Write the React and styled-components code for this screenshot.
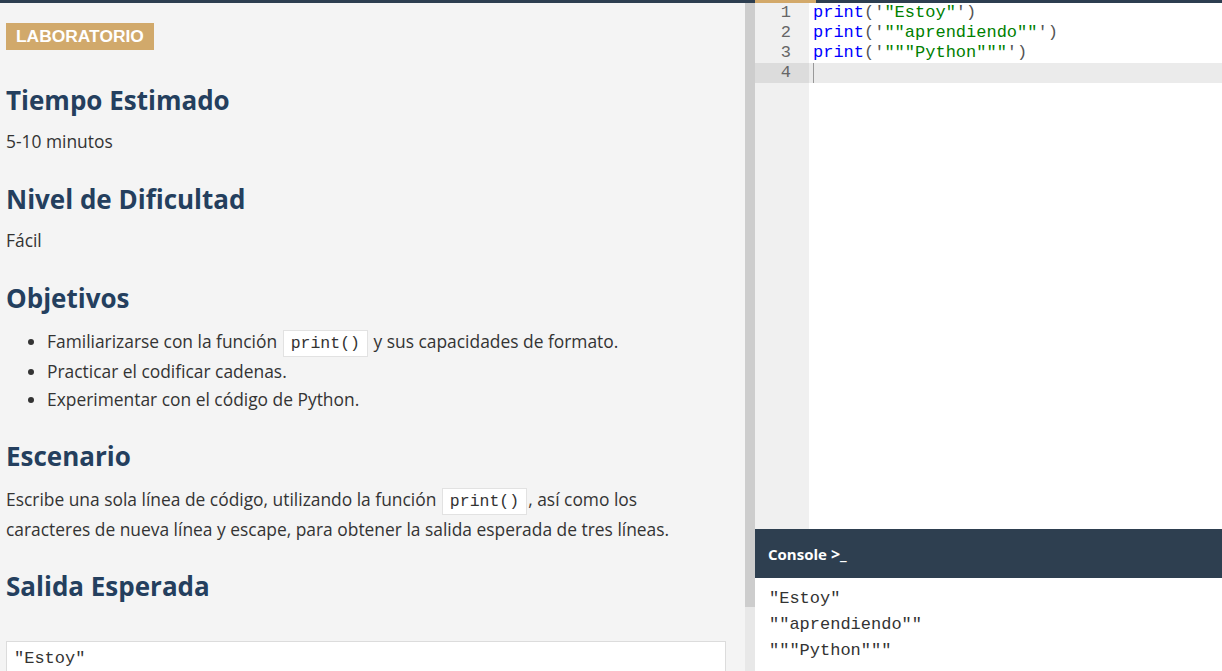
import React from "react";
//Styling
import styled, { createGlobalStyle } from "styled-components";

const GlobalStyle = createGlobalStyle`
  html, body {
    margin: 0;
    padding: 0;
    height: 100%;
    overflow: hidden;
  }
  body {
    font-family: "Open Sans", "Liberation Sans", sans-serif;
    color: #333;
  }
`;

//Data
const code = [
  { text: `"Estoy"`, quote: "'" },
  { text: `""aprendiendo""`, quote: "'" },
  { text: `"""Python"""`, quote: "'" },
];

const output = [`"Estoy"`, `""aprendiendo""`, `"""Python"""`];

const App = () => {
  return (
    <>
      <GlobalStyle />
      <Layout>
        <Instructions>
          <Content>
            <Badge>LABORATORIO</Badge>
            <Heading first>Tiempo Estimado</Heading>
            <Text>5-10 minutos</Text>
            <Heading>Nivel de Dificultad</Heading>
            <Text>Fácil</Text>
            <Heading>Objetivos</Heading>
            <List>
              <li>
                Familiarizarse con la función <Code>print()</Code> y sus
                capacidades de formato.
              </li>
              <li>Practicar el codificar cadenas.</li>
              <li>Experimentar con el código de Python.</li>
            </List>
            <Heading>Escenario</Heading>
            <Text lines>
              Escribe una sola línea de código, utilizando la función{" "}
              <Code>print()</Code>, así como los
              <br />
              caracteres de nueva línea y escape, para obtener la salida
              esperada de tres líneas.
            </Text>
            <Heading>Salida Esperada</Heading>
            <OutputBox>{`"Estoy"`}</OutputBox>
          </Content>
          <Scrollbar>
            <Thumb />
          </Scrollbar>
        </Instructions>
        <Workspace>
          <TabStrip>
            <ActiveTab />
          </TabStrip>
          <Editor>
            <Gutter>
              {[1, 2, 3, 4].map((n) => (
                <LineNumber key={n} active={n === 4}>
                  {n}
                </LineNumber>
              ))}
            </Gutter>
            <Lines>
              {code.map((line, i) => (
                <Line key={i}>
                  <Keyword>print</Keyword>
                  <Punct>({line.quote}</Punct>
                  <Str>{line.text}</Str>
                  <Punct>{line.quote})</Punct>
                </Line>
              ))}
              <Line active>
                <Cursor />
              </Line>
            </Lines>
          </Editor>
          <ConsoleBar>
            Console <Prompt>&gt;_</Prompt>
          </ConsoleBar>
          <ConsoleBody>
            {output.map((line, i) => (
              <div key={i}>{line}</div>
            ))}
          </ConsoleBody>
        </Workspace>
      </Layout>
    </>
  );
};

const Layout = styled.div`
  display: flex;
  height: 100vh;
  width: 100vw;
`;
const Instructions = styled.div`
  display: flex;
  width: 755px;
  flex-shrink: 0;
  border-top: 3px solid #2d3e50;
  background-color: #f4f4f4;
  overflow: hidden;
`;
const Content = styled.div`
  flex: 1;
  padding: 20px 19px 0 6px;
`;
const Scrollbar = styled.div`
  width: 10px;
  display: flex;
  flex-direction: column;
  background-color: #e8e8e8;
`;
const Thumb = styled.div`
  height: 604px;
  background-color: #cdcdcd;
`;
const Badge = styled.div`
  display: inline-block;
  background-color: #d1a96b;
  color: #fff;
  font-family: "Liberation Sans", Arial, sans-serif;
  font-weight: bold;
  font-size: 17.4px;
  line-height: 27px;
  padding: 0 10px;
`;
const Heading = styled.h2`
  font-size: 26px;
  line-height: 36px;
  font-weight: 700;
  color: #243f5e;
  margin: ${(props) => (props.first ? "32px" : "24px")} 0 8px;
`;
const Text = styled.p`
  font-size: 17.4px;
  line-height: ${(props) => (props.lines ? "30px" : "31px")};
  margin: ${(props) => (props.lines ? "10px" : "0")} 0 0;
  color: #333;
`;
const List = styled.ul`
  margin: 10px 0 0;
  padding: 0 0 1px 41px;
  font-size: 17.4px;
  line-height: 28px;
  li:first-child {
    line-height: 31px;
  }
`;
const Code = styled.code`
  font-family: "Liberation Mono", "Courier New", monospace;
  font-size: 16.5px;
  line-height: 1;
  color: #333;
  background-color: #fff;
  border: 1px solid #e2e2e2;
  padding: 3px 7px;
  margin: 0 1px;
`;
const OutputBox = styled.pre`
  margin: 37px 0 0;
  background-color: #fff;
  border: 1px solid #dcdcdc;
  border-bottom: none;
  padding: 7px 7px 10px;
  font-family: "Liberation Mono", "Courier New", monospace;
  font-size: 17px;
  line-height: 20px;
  color: #333;
`;
const Workspace = styled.div`
  flex: 1;
  display: flex;
  flex-direction: column;
  background-color: #fff;
`;
const TabStrip = styled.div`
  height: 3px;
  display: flex;
  background-color: #2d3e50;
`;
const ActiveTab = styled.div`
  width: 61px;
  background-color: #d3a96a;
`;
const Editor = styled.div`
  flex: 1;
  display: flex;
  font-family: "Liberation Mono", "Courier New", monospace;
  font-size: 17px;
  line-height: 20px;
`;
const Gutter = styled.div`
  width: 54px;
  background-color: #f0f0f0;
`;
const LineNumber = styled.div`
  text-align: right;
  padding-right: 18px;
  color: #666;
  background-color: ${(props) => (props.active ? "#dcdcdc" : "transparent")};
`;
const Lines = styled.div`
  flex: 1;
`;
const Line = styled.div`
  height: 20px;
  padding-left: 4px;
  white-space: pre;
  display: flex;
  align-items: center;
  background-color: ${(props) => (props.active ? "#ebebeb" : "transparent")};
`;
const Keyword = styled.span`
  color: #0000ff;
`;
const Punct = styled.span`
  color: #555;
`;
const Str = styled.span`
  color: #008000;
`;
const Cursor = styled.span`
  width: 1px;
  height: 20px;
  background-color: #999;
`;
const ConsoleBar = styled.div`
  height: 49px;
  display: flex;
  align-items: center;
  gap: 4px;
  padding-left: 13px;
  background-color: #2e3f50;
  color: #fff;
  font-weight: 700;
  font-size: 15px;
`;
const Prompt = styled.span`
  font-size: 16px;
`;
const ConsoleBody = styled.div`
  height: 93px;
  padding: 8px 14px 0;
  box-sizing: border-box;
  font-family: "Liberation Mono", "Courier New", monospace;
  font-size: 17px;
  line-height: 26px;
  color: #333;
`;

export default App;
